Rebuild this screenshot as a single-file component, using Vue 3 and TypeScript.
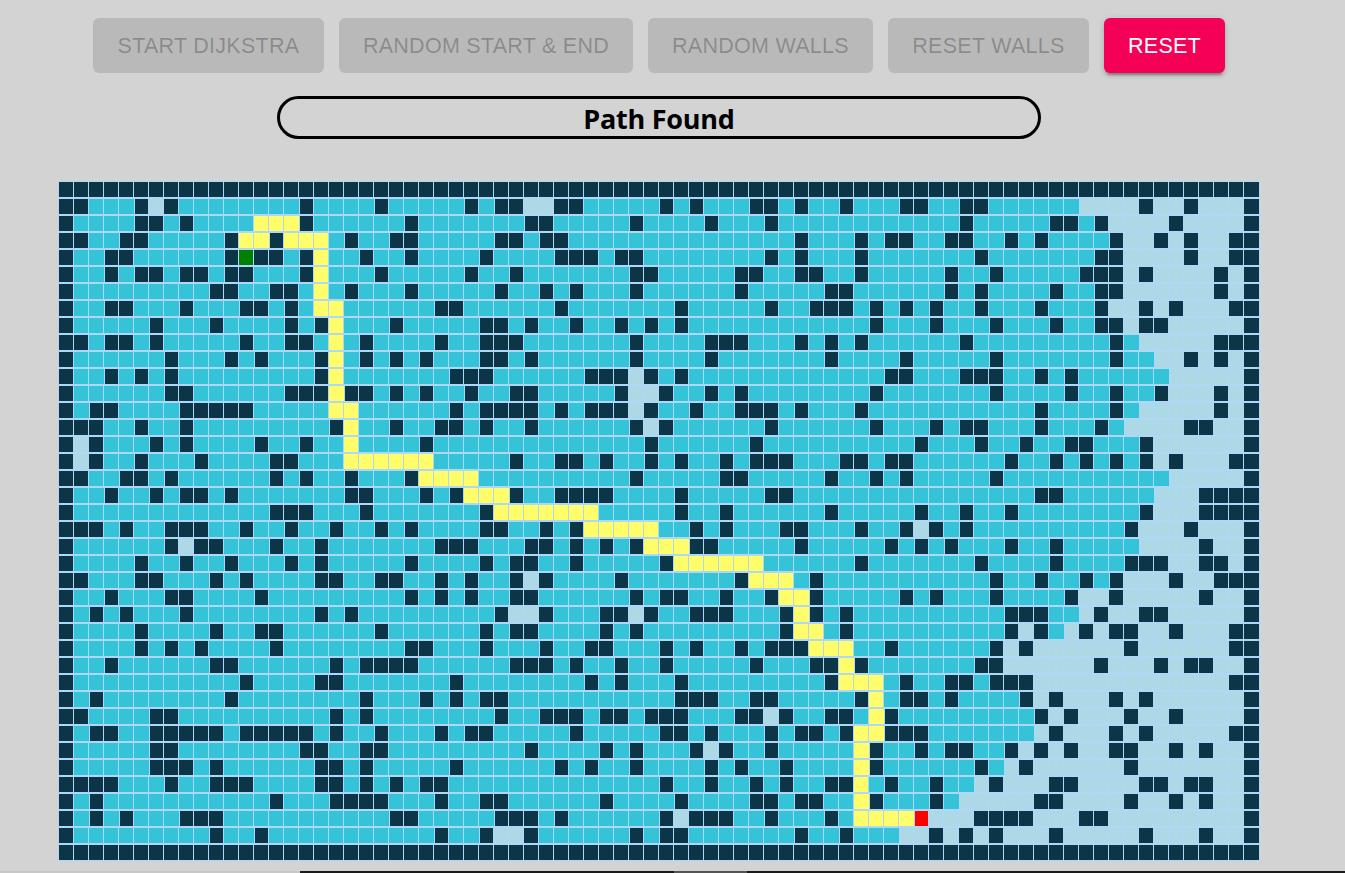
<script setup lang="ts">
type CellKind = 'wall' | 'visited' | 'path' | 'start' | 'end' | 'open'

interface Action {
  label: string
  size: string
  disabled: boolean
}

const actions: Action[] = [
  { label: 'Start Dijkstra', size: 'w-start', disabled: true },
  { label: 'Random Start & End', size: 'w-ends', disabled: true },
  { label: 'Random Walls', size: 'w-walls', disabled: true },
  { label: 'Reset Walls', size: 'w-clear', disabled: true },
  { label: 'Reset', size: 'w-reset', disabled: false },
]

// # wall, . visited, * shortest path, - untouched, S start, E end
const kinds: Record<string, CellKind> = {
  '#': 'wall',
  '.': 'visited',
  '*': 'path',
  '-': 'open',
  S: 'start',
  E: 'end',
}

const maze = `
################ ################ ################ ################ ################
##...#-#........ #....#.....#.##- -##.....#.#...## .#..#...##..##.. ....----#--#---#
#....##.#....*** #......#.......# #.....#....#...# ............#... ..##.#----#----#
##..##.....#**#* **.#..##.....##. ##.............. .#...#.##..##..# .#....#--#-#--##
#..##......#S##. #*..#..#....#... .###.##........# .#...#.......#.. .....##----#--##
#..#.##.##.##... #*...#.....#..#. ......##.....##. .##..#.....#..#. ....###-#----#-#
#.........##..## .*.#...#.....#.. #.#...#......#.. ...##......#.#.. ..#..##------#-#
#..##...#...##.# .**......##..... .#.......#.....# ..###.#.#.#..#.. .#...#--#-#---##
#.....#...#....# .#*...#.....##.# ..#..#.#.#...... ......#...#...#. ..#..##-##-----#
##.##.#.....#..# #.*.#....#..###. ......#....###.. .#.#.#......#... ......#.-----###
#......#...#.#.. .#*.#.#.#...##.# ......#....#.... ...#....#.....#. ......#..--#-#-#
#..#.#.#........ .#*.......###... ...###-#.#...... .......##...###. .#.#......-----#
#......##......# ##*##.#.#..#..## .....#--#..#.#.. ......#.......#. ...#..#..#---#-#
#.##....#####... ..**......#.#### .#.###-#..#..### .#...#.......... .#....#.-----#-#
###..#..#....... ..#*..#..##.#..# ......#-#......# ......#...#.##.. .#...#.----##--#
#-#...#.#....#.. #..*....#....... .......#......#. .........#...#.. #..##...#------#
#-#..#...#....## ...******.....#. .##.#..#.#..#.## #...##.##......# ..#.#.#.#-#---##
##..##.#......#. #..#...#****.... ......#.....##.. ...#..#.#.....#. ..........-----#
#..#..#.##.#.... ...##...#.#***#. .####....#.....# #............... .##......---####
#.............## #...#.......#*** ****.....#..#... ...#.....#..#..# ........#---####
###.#..###..#..# ..#..#.#....##.. #.#*****..#.#... ##...#..#-#.#... .......#---#---#
#......#-##...#. .#.......###...# #.#.#.#***##.... .#.....#.#.#...# ..#.....----#--#
#....#..#..#...# .#.....#....#.## ..#.....#******. .....#.......#.. ..#....###--##-#
##...##...#.#... .##..##..#.#..#- #....#.......#** *.#...........#. .#..#.#---#--###
#..#...##....#.. .......#.#.#..## ......#.##..#..# **#.....#.#...#. ...#--#-----#--#
#.#.#...#....... .#.#.........#-- #...##-#..###... #*#.#..........# ##..-#--##-----#
#....#....#..##. .....#......#.## ....#.#......... #**.#..........# -#.-#-##--#---##
#....#.#.#....#. .......##...#... #..##...#.#..#.# ##***..#......#- #------#------##
#..#......##.... ..#.####......## #.#..#..#.....#. ..##*#.......##- -----#---#-##--#
#...........#... .##.......#..... ...#.#...#...... ...#***.#..##.## #-------------##
#.#........#.... ....#...#.#.##.. .........###..## .....#*.##.#.... #-#---#-#------#
##....##........ ..#.#........#.. ###.##.###...##- #..##.*#........ .#-#---#--#----#
#.##..#####.#### #.#..#...#.##... ..#.....##.#...# .##.#**###...... .-#---#-#-----##
#.....##........ ##..##.........# ....#.#...#-#..# .....*#..#.##..# -#-#--##--#-#--#
#.....###.#..... .##.#.....#..... .#.#..#....#.#.. #....*#......#.- #------#-------#
####...#..###... .##.#.#.##...... ........#..#..#. #..##*.#..#..-#- --##----##-##--#
#.#...........#. ..####...#..##.. ....#....#....## .##..*#...#.---- -##----#--#-#--#
#.#.#...###..... ......##.....### .#......#-###..# ...#.****E---### #---##---------#
#.........#..#.. .........#..#--# ......#.##...... .#..#...--#-#-#- --#-----#---#--#
################ ################ ################ ################ ################
`

const grid: CellKind[][] = maze
  .trim()
  .split('\n')
  .map((line) => [...line.replace(/ /g, '')].map((c) => kinds[c]))
</script>

<template>
  <div class="page">
    <main class="content">
      <div class="toolbar">
        <button
          v-for="action in actions"
          :key="action.label"
          class="btn"
          :class="action.size"
          :disabled="action.disabled"
        >
          {{ action.label }}
        </button>
      </div>
      <div class="status"><span class="status-text">Path Found</span></div>
      <div class="board">
        <div v-for="(row, r) in grid" :key="r" class="row">
          <div v-for="(kind, c) in row" :key="c" class="cell" :class="kind"></div>
        </div>
      </div>
    </main>
    <footer class="strip">
      <div class="strip-light"></div>
      <div class="strip-mark"></div>
    </footer>
  </div>
</template>

<style>
body {
  overflow: hidden;
}
</style>

<style scoped>
.page {
  display: flex;
  flex-direction: column;
  justify-content: space-between;
  height: 873px;
  overflow: hidden;
  background: lightgrey;
}

.content {
  display: flex;
  flex-direction: column;
  align-items: center;
  width: 1318px;
  padding-top: 18px;
}

.toolbar {
  display: flex;
  gap: 15px;
}

.btn {
  box-sizing: border-box;
  height: 55px;
  padding: 1px 0 0;
  border: 0;
  border-radius: 6px;
  background: #f50057;
  color: #fff;
  font: 400 21.5px/37px 'Liberation Sans', Arial, sans-serif;
  letter-spacing: 0.27px;
  text-transform: uppercase;
  white-space: nowrap;
  box-shadow:
    0 4.5px 1.5px -3px rgba(0, 0, 0, 0.2),
    0 3px 3px 0 rgba(0, 0, 0, 0.14),
    0 1.5px 7.5px 0 rgba(0, 0, 0, 0.12);
}

.btn:disabled {
  background: rgba(0, 0, 0, 0.12);
  color: rgba(0, 0, 0, 0.26);
  box-shadow: none;
}

.w-start { width: 231px; }
.w-ends { width: 294px; }
.w-walls { width: 225px; }
.w-clear { width: 201px; }
.w-reset { width: 121px; }

.status {
  box-sizing: border-box;
  display: flex;
  align-items: center;
  justify-content: center;
  width: 764px;
  height: 43px;
  margin-top: 23px;
  padding-top: 2px;
  border: 3px solid #000;
  border-radius: 22px;
  color: #000;
  font: 700 27px/35px 'Open Sans', 'Noto Sans', sans-serif;
  letter-spacing: -0.25px;
}

.board {
  margin-top: 42px;
}

.row {
  display: flex;
  padding: 1px 0;
}

.cell {
  width: 15px;
  height: 15px;
  background: lightblue;
  outline: 1px solid rgb(175, 216, 248);
}

.wall {
  background: rgb(12, 53, 71);
}

.start {
  background: green;
}

.end {
  background: red;
}

.visited,
.path {
  position: relative;
  z-index: 1;
}

.visited {
  background: rgba(0, 190, 218, 0.75);
}

.path {
  background: rgb(255, 254, 106);
}

.strip {
  display: flex;
  height: 2px;
  background: #1a1a1a;
}

.strip-light {
  width: 300px;
  background: #c8c8c8;
}

.strip-mark {
  width: 73px;
  margin-left: 374px;
  background: #555;
}
</style>
